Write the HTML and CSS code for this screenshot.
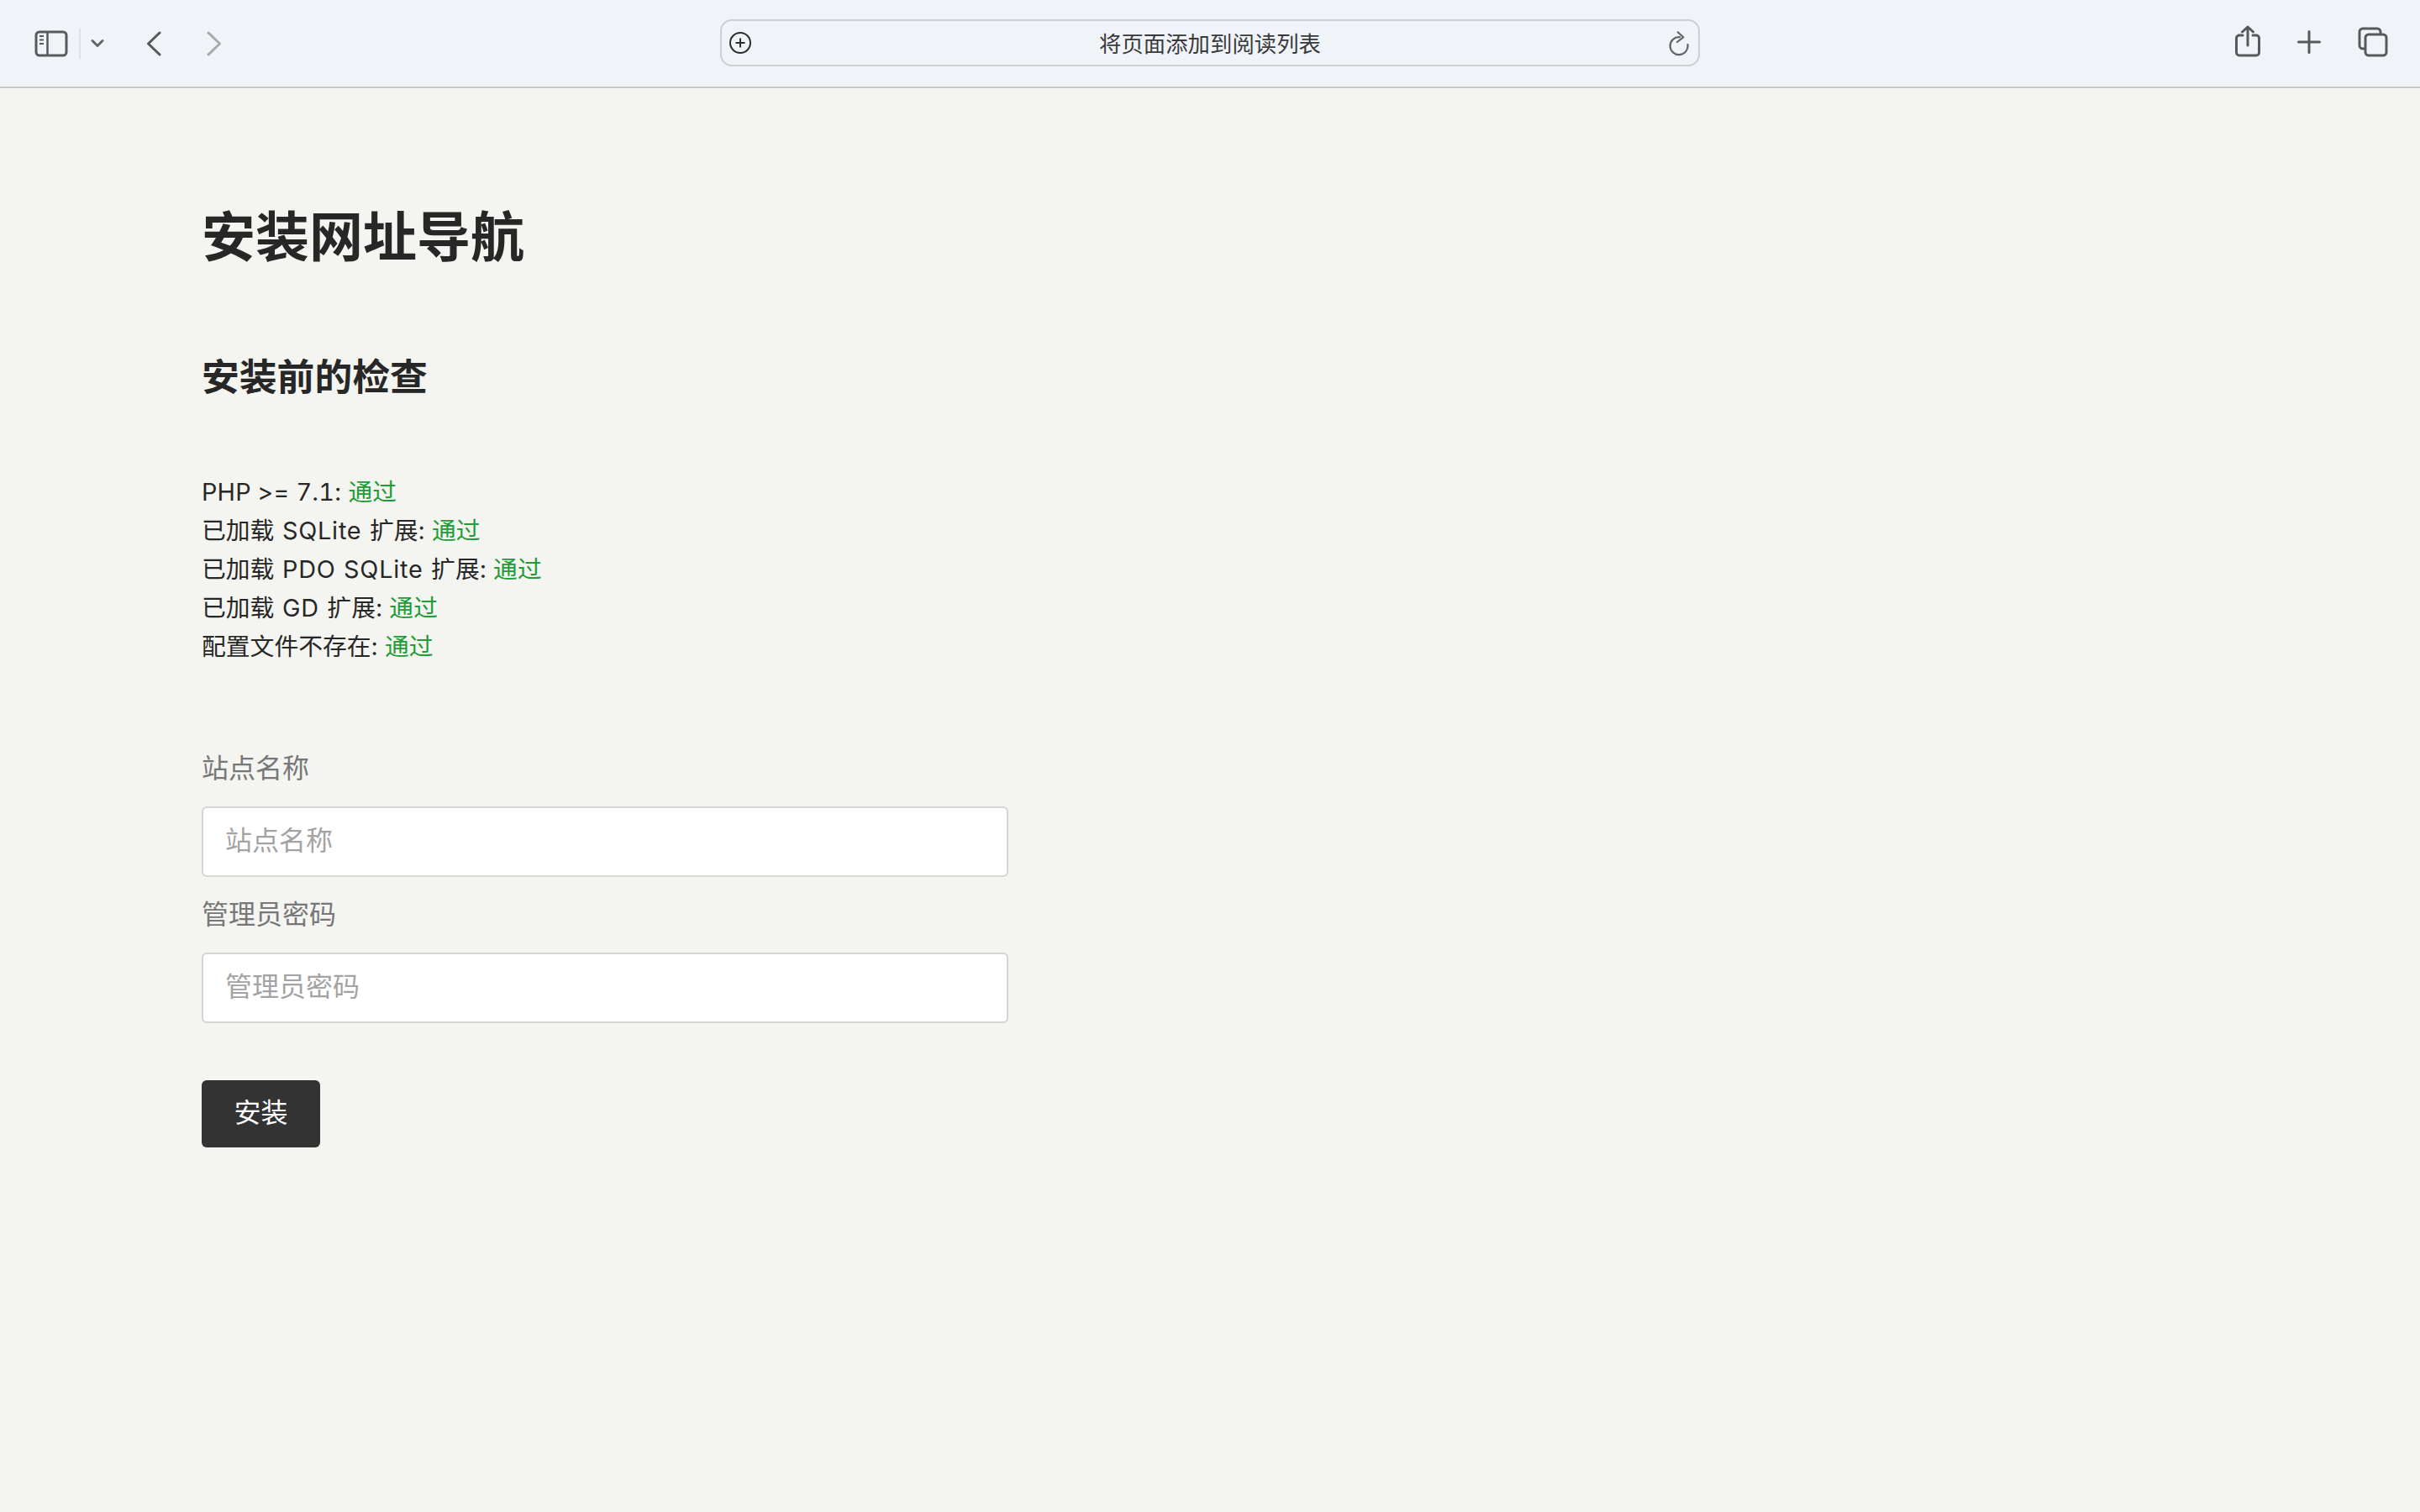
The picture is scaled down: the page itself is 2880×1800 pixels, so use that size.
FILE: index.html
```html
<!DOCTYPE html>
<html lang="zh-CN">
<head>
<meta charset="utf-8">
<title>安装网址导航</title>
<link rel="stylesheet" href="styles.css">
</head>
<body>
<header class="toolbar">
  <div class="tools-left">
    <svg class="ic-sidebar" width="40" height="32" viewBox="0 0 40 32" fill="none" stroke="#58595c" stroke-width="3"><rect x="2" y="2" width="36" height="28" rx="4"/><path d="M15.500 2v28" stroke-width="2.500"/><path d="M6 7h5M6 11.500h5M6 16h5" stroke-width="2"/></svg>
    <span class="tool-sep"></span>
    <svg class="ic-chevron" width="16" height="12" viewBox="0 0 16 12" fill="none" stroke="#646569" stroke-width="3" stroke-linecap="round" stroke-linejoin="round"><path d="M2 2.500l6 6 6-6"/></svg>
    <svg class="ic-back" width="18" height="30" viewBox="0 0 18 30" fill="none" stroke="#55565a" stroke-width="3" stroke-linecap="round" stroke-linejoin="round"><path d="M16 2L2.500 15 16 28"/></svg>
    <svg class="ic-forward" width="18" height="30" viewBox="0 0 18 30" fill="none" stroke="#a8a9ab" stroke-width="3" stroke-linecap="round" stroke-linejoin="round"><path d="M2 2l13.500 13L2 28"/></svg>
  </div>
  <div class="address">
    <svg class="ic-add" width="26" height="26" viewBox="0 0 26 26" fill="none" stroke="#2c2c2e" stroke-width="2"><circle cx="13" cy="13" r="12"/><path d="M13 7.500v11M7.500 13h11"/></svg>
    <span class="address-text">将页面添加到阅读列表</span>
    <svg class="ic-reload" width="24" height="30" viewBox="0 0 24 30" fill="none" stroke="#626366" stroke-width="2.200" stroke-linecap="round" stroke-linejoin="round"><path d="M13 7.200A10.500 10.500 0 1 0 22.500 16"/><path d="M10.700 1.300L17.300 7.300 10 13"/></svg>
  </div>
  <div class="tools-right">
    <svg class="ic-share" width="30" height="38" viewBox="0 0 30 38" fill="none" stroke="#58595c" stroke-width="3" stroke-linecap="round" stroke-linejoin="round"><path d="M9 12H5a3.500 3.500 0 0 0-3.500 3.500v17A3.500 3.500 0 0 0 5 36h20a3.500 3.500 0 0 0 3.500-3.500v-17A3.500 3.500 0 0 0 25 12h-4"/><path d="M15 24V2M8.500 8L15 2l6.500 6"/></svg>
    <svg class="ic-plus" width="28" height="28" viewBox="0 0 28 28" fill="none" stroke="#58595c" stroke-width="3" stroke-linecap="round"><path d="M14 1.500v25M1.500 14h25"/></svg>
    <svg class="ic-tabs" width="36" height="36" viewBox="0 0 36 36" fill="none" stroke="#58595c" stroke-width="3"><path d="M8 26H6a4 4 0 0 1-4-4V6a4 4 0 0 1 4-4h17a4 4 0 0 1 4 4v2"/><rect x="9" y="9" width="25" height="25" rx="4"/></svg>
  </div>
</header>
<main class="page">
  <h1 class="title">安装网址导航</h1>
  <h2 class="subtitle">安装前的检查</h2>
  <ul class="checks">
    <li><span class="version">PHP &gt;= 7.1</span>: <span class="pass">通过</span></li>
    <li>已加载<span class="latin"> SQLite </span>扩展: <span class="pass">通过</span></li>
    <li>已加载<span class="latin"> PDO SQLite </span>扩展: <span class="pass">通过</span></li>
    <li>已加载<span class="latin"> GD </span>扩展: <span class="pass">通过</span></li>
    <li>配置文件不存在: <span class="pass">通过</span></li>
  </ul>
  <form class="form">
    <label class="field-label" for="site">站点名称</label>
    <input class="field" id="site" type="text" placeholder="站点名称">
    <label class="field-label" for="pass">管理员密码</label>
    <input class="field" id="pass" type="password" placeholder="管理员密码">
    <button class="submit" type="button">安装</button>
  </form>
</main>
</body>
</html>
```
FILE: styles.css
```css
* { box-sizing: border-box; }
html, body { margin: 0; height: 100%; }
body {
  background: #f4f4f0;
  color: #272727;
  font-family: "Noto Sans CJK SC", "Noto Sans", sans-serif;
}
.toolbar {
  display: grid;
  grid-template-columns: 1fr 1166px 1fr;
  align-items: center;
  height: 105px;
  background: #f0f4f8;
  border-bottom: 2px solid #c9cbca;
}
.tools-left { display: flex; align-items: center; padding-left: 41px; }
.tool-sep { width: 2px; height: 36px; background: #dfe2e6; margin: 0 12px 0 13px; }
.ic-back { margin-left: 50px; }
.ic-forward { margin-left: 54px; }
.tools-right { display: flex; align-items: center; justify-content: flex-end; padding-right: 38px; gap: 44px; }
.ic-share { margin-top: -5px; }
.ic-plus, .ic-tabs { margin-top: -3px; }
.address {
  display: flex;
  align-items: center;
  justify-content: space-between;
  height: 56px;
  padding: 0 11px 0 9px;
  border: 2px solid #ccd0d3;
  border-radius: 14px;
  margin-bottom: 1px;
}
.address-text { font-size: 26.400px; line-height: 1; color: #3a3a3c; }
.ic-reload { margin-top: 2px; }
.page { padding: 0 240px; }
.title {
  margin: 0;
  padding-top: 132px;
  font-size: 64px;
  line-height: 80px;
  font-weight: 700;
}
.subtitle {
  margin: 0;
  padding-top: 99px;
  font-size: 44.800px;
  line-height: 60px;
  font-weight: 700;
}
.checks {
  list-style: none;
  margin: 0;
  padding: 87px 0 0;
  font-family: Inter, "Noto Sans CJK SC", sans-serif;
  font-size: 28.800px;
  font-weight: 400;
  line-height: 46px;
}
.latin {
  font-feature-settings: "tnum";
  letter-spacing: .8px;
  word-spacing: 1px;
}
.version {
  font-feature-settings: "tnum";
  letter-spacing: .2px;
}
.pass { color: #229c38; }
.form { display: flex; flex-direction: column; align-items: flex-start; padding-top: 95px; }
.field-label { font-size: 32px; line-height: 48px; color: #777; }
.field {
  width: 960px;
  height: 84px;
  margin: 24px 0 0;
  padding: 0 26px 8px;
  border: 2px solid #d5d5d5;
  border-radius: 6px;
  background: #fff;
  font: 32px "Noto Sans CJK SC", sans-serif;
  color: #333;
}
.field::placeholder { color: #a3a3a3; opacity: 1; }
.field + .field-label { margin-top: 18px; }
.submit {
  width: 141px;
  height: 80px;
  margin-top: 68px;
  padding: 0 0 8px;
  border: 0;
  border-radius: 6px;
  background: #333;
  color: #fff;
  font: 32px "Noto Sans CJK SC", sans-serif;
}
```
